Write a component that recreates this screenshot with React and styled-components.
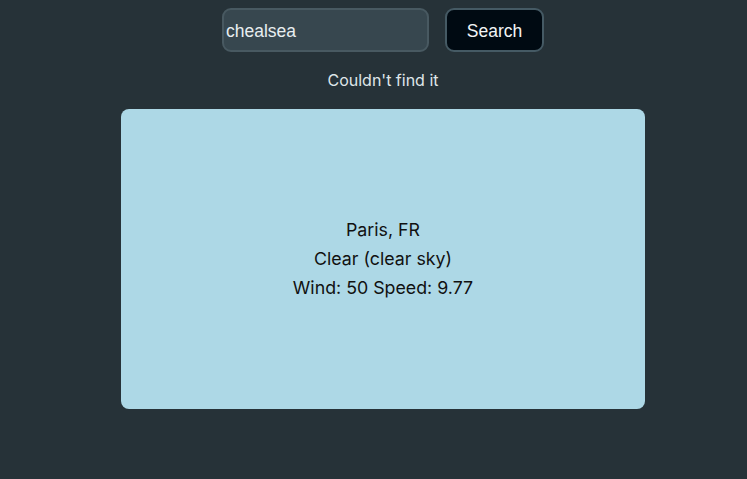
import styled, { createGlobalStyle } from "styled-components";
import { useState } from "react";

const GlobalStyle = createGlobalStyle`
    html, body {
        margin: 0;
        padding: 0;
        background-color: #263238;
        height: 100%;
    }
    #root {
        min-height: 100%;
    }
`

export default function App() {
    const [query, setQuery] = useState("chealsea");
    const weather = {
        city: "Paris",
        country: "FR",
        main: "Clear",
        description: "clear sky",
        wind: 50,
        speed: 9.77,
    };

    return (
        <Page>
            <GlobalStyle />
            <SearchRow>
                <SearchInput value={query} onChange={(e) => setQuery(e.target.value)} />
                <SearchButton>Search</SearchButton>
            </SearchRow>
            <Message>Couldn't find it</Message>
            <WeatherCard>
                <Line>{weather.city}, {weather.country}</Line>
                <Line>{weather.main} ({weather.description})</Line>
                <Line>Wind: {weather.wind} Speed: {weather.speed}</Line>
            </WeatherCard>
        </Page>
    );
}

const Page = styled.div`
    display: flex;
    flex-direction: column;
    align-items: center;
    padding: 8px 0 0 19px;
    font-family: Inter, "Liberation Sans", sans-serif;
`

const SearchRow = styled.div`
    display: flex;
    flex-direction: row;
    gap: 16px;
`

const SearchInput = styled.input`
    box-sizing: border-box;
    width: 207px;
    height: 44px;
    padding: 2px 2px 0;
    background-color: #37474f;
    border: 2px solid #485961;
    border-radius: 9px;
    color: #e8eef0;
    font-family: "Liberation Sans", Arial, sans-serif;
    font-size: 17.5px;
    &:focus {
        outline: none;
    }
`

const SearchButton = styled.button`
    box-sizing: border-box;
    width: 99px;
    height: 44px;
    padding: 2px 0 0;
    background-color: #000a12;
    border: 2px solid #455a64;
    border-radius: 9px;
    color: #f2f5f6;
    font-family: "Liberation Sans", Arial, sans-serif;
    font-size: 17.5px;
    cursor: pointer;
`

const Message = styled.p`
    margin: 18px 0 19px;
    color: #dfe6e9;
    font-size: 16px;
    line-height: 20px;
`

const WeatherCard = styled.div`
    box-sizing: border-box;
    display: flex;
    flex-direction: column;
    align-items: center;
    justify-content: center;
    width: 524px;
    height: 300px;
    padding-bottom: 2px;
    background-color: #add8e6;
    border-radius: 8px;
    color: #111;
`

const Line = styled.div`
    font-size: 17.8px;
    line-height: 29px;
`
